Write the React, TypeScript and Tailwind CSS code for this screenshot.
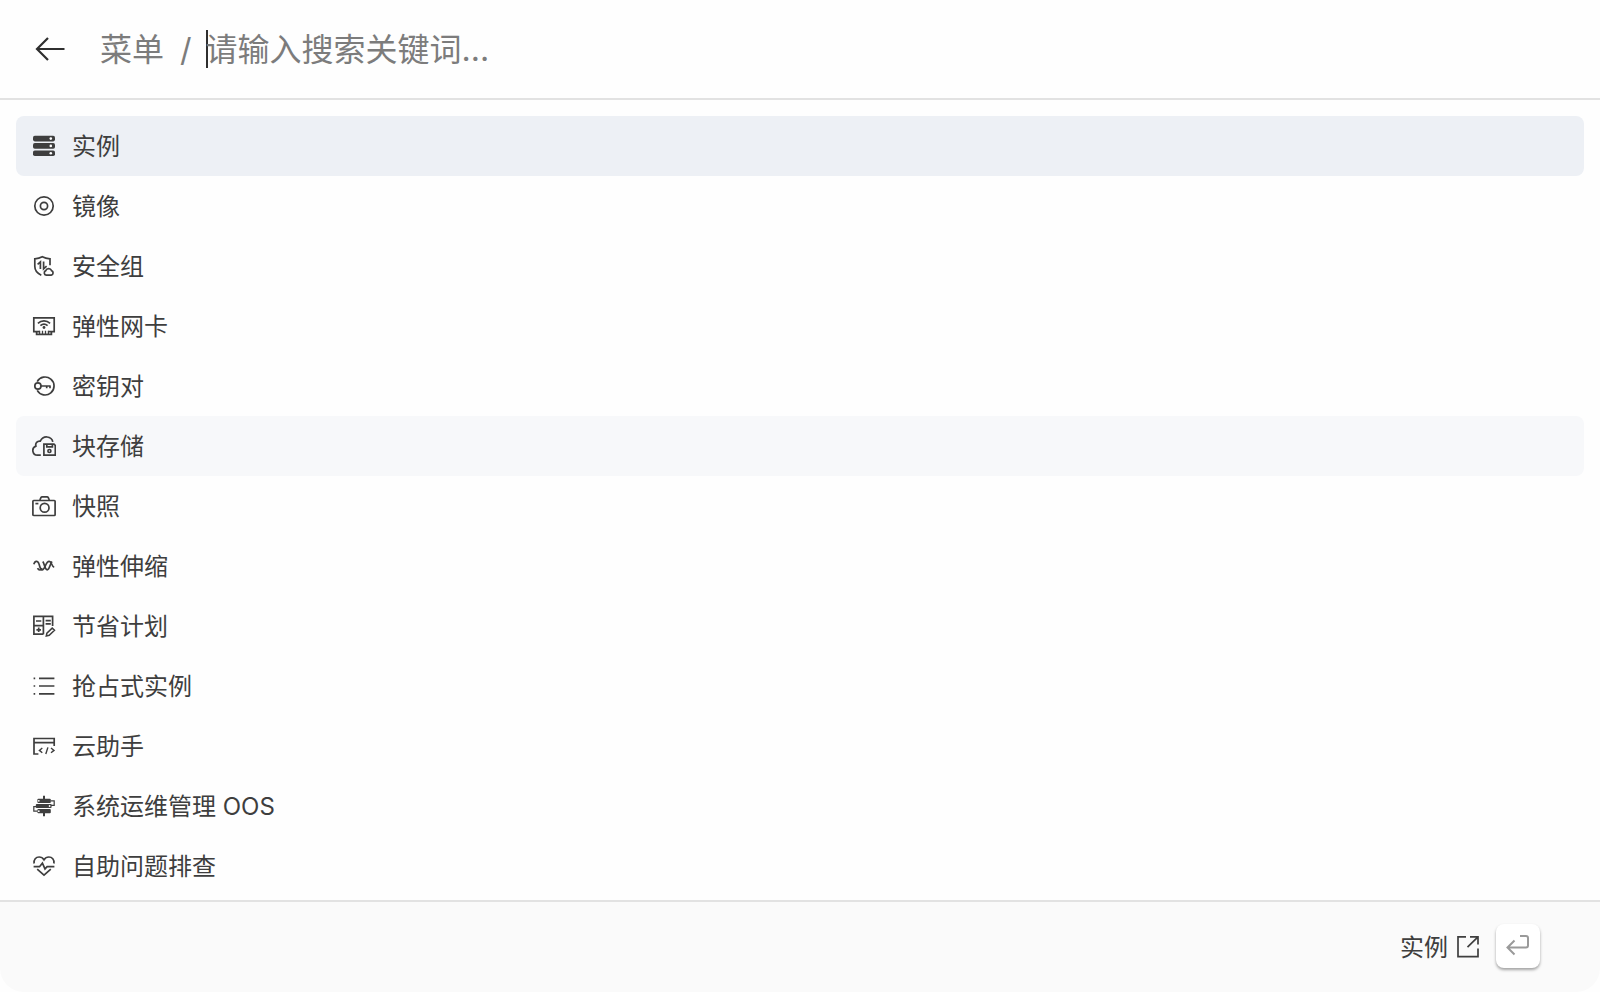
import type { ReactNode } from "react";
import clsx from "clsx";

function Icon({ children }: { children: ReactNode }) {
  return (
    <svg
      className="h-6 w-6 shrink-0"
      viewBox="0 0 24 24"
      fill="none"
      stroke="currentColor"
      strokeWidth="1.7"
      aria-hidden="true"
    >
      {children}
    </svg>
  );
}

type MenuItem = {
  label: string;
  icon: ReactNode;
  state?: "selected" | "hovered";
};

const MENU_ITEMS: MenuItem[] = [
  {
    label: "实例",
    state: "selected",
    icon: (
      <>
        <g fill="currentColor" stroke="none">
          <rect x="1" y="1.8" width="22" height="5.6" rx="1.8" />
          <rect x="1" y="9.1" width="22" height="5.6" rx="1.8" />
          <rect x="1" y="16.4" width="22" height="5.6" rx="1.8" />
        </g>
        <g fill="#fff" stroke="none">
          <circle cx="18.8" cy="4.6" r="1.3" />
          <circle cx="18.8" cy="11.9" r="1.3" />
          <circle cx="18.8" cy="19.2" r="1.3" />
        </g>
      </>
    ),
  },
  {
    label: "镜像",
    icon: (
      <>
        <circle cx="12" cy="12" r="9.2" />
        <circle cx="12" cy="12" r="3.6" />
      </>
    ),
  },
  {
    label: "安全组",
    icon: (
      <>
        <path d="M9.3 21.2C5 19.3 2.8 16.6 2.8 12.3V4.8C5.8 4.6 8.2 3.9 10.3 2.8C12.4 3.9 14.9 4.6 18 4.8V11.2" />
        <path d="M5.6 10.4L8.4 7.9V15M11.6 7.6V14.8L14.6 12.2" />
        <path d="M14.3 21.2A2.4 2.4 0 0 1 13.8 16.6A3 3 0 0 1 19.5 16.6A2.4 2.4 0 0 1 19.2 21.2Z" />
      </>
    ),
  },
  {
    label: "弹性网卡",
    icon: (
      <>
        <path d="M7.6 17.6H1.8V3.9H22.2V17.6H16.4" />
        <path d="M4.6 17.6V20.4H19.4V17.6" />
        <path d="M7.6 16.8V20M10.5 16.8V20M13.5 16.8V20M16.4 16.8V20" strokeWidth="1.3" />
        <path d="M5.9 9.3C9.4 6.1 14.6 6.1 18.1 9.3M8.4 11.7C10.5 9.8 13.5 9.8 15.6 11.7" />
        <circle cx="12" cy="13.5" r="1.4" fill="currentColor" stroke="none" />
      </>
    ),
  },
  {
    label: "密钥对",
    icon: (
      <>
        <path d="M5.2 7.6A9 9 0 1 1 5.2 16.4" />
        <circle cx="5.9" cy="12" r="3.1" />
        <path d="M9 12H18.7M14.7 12V14.2M18 12V14.2" />
      </>
    ),
  },
  {
    label: "块存储",
    state: "hovered",
    icon: (
      <>
        <path d="M8.8 21.2H5.4A4.7 4.7 0 0 1 3.9 12.1C3.1 9.2 5.2 6.8 8.3 7.2C10 3.6 12.5 2.8 15.1 3C18.3 3.3 20.3 5.3 20.8 7.8" />
        <path d="M11.9 10.1H22L23.3 11.4V21.2H11.9Z" />
        <path d="M14.8 10.2V12.9H20.4V10.2" />
        <circle cx="17.4" cy="17" r="1.5" />
      </>
    ),
  },
  {
    label: "快照",
    icon: (
      <>
        <rect x="0.9" y="6.5" width="22.2" height="15" rx="0.8" />
        <path d="M7.9 6L8.9 3.6Q9.3 2.8 10.2 2.8H15Q15.9 2.8 16.3 3.6L17.3 6" />
        <circle cx="12.6" cy="13.8" r="4.4" />
        <path d="M3.4 9.6H6.4" />
      </>
    ),
  },
  {
    label: "弹性伸缩",
    icon: (
      <>
        <path d="M1.8 10.2C2.8 7 5.2 6.2 6.6 9C8.2 12.4 7.8 16 10.2 16C13.2 16 13.4 7.3 17.2 7.3C19.8 7.3 19.4 12.6 22.2 13.2" />
        <path d="M5.6 14.2C6.6 16.6 8.8 16.6 10.2 14.2M10.8 7.6C12.8 10.4 12.8 15.8 15.2 15.8C17.6 15.8 17.8 10.4 20 7.4" />
      </>
    ),
  },
  {
    label: "节省计划",
    icon: (
      <>
        <path d="M11.4 20.2H1.9V2.3H20.6V12M11.4 2.3V20.2M1.9 11.6H11.4" />
        <path d="M4 7H9.3M13.6 6.6H18.8M13.6 9.8H18.8" />
        <path d="M4.4 15.8H9M6.7 13.5V18.1" />
        <path d="M20.2 14.1L22.5 16.3L17.2 21.2L14.3 21.9L14.9 19.2Z" strokeWidth="1.5" />
      </>
    ),
  },
  {
    label: "抢占式实例",
    icon: (
      <>
        <path d="M7 4.3H22.4M7 12H22.4M7 19.8H22.4" />
        <path d="M1.6 4.3H3.2M1.6 12H3.2M1.6 19.8H3.2" />
      </>
    ),
  },
  {
    label: "云助手",
    icon: (
      <>
        <path d="M6.4 20H2V4.5H22.2V12M2 8.6H22.2" />
        <path d="M10.3 14L7.4 16.4L10.3 18.8M15.9 13.4L13.8 20M19 14L22 16.4L19 18.8" strokeWidth="1.4" />
      </>
    ),
  },
  {
    label: "系统运维管理 OOS",
    icon: (
      <>
        <path d="M12 1.8V5.2M12 18.8V22.2" strokeWidth="2" />
        <g fill="currentColor" stroke="none">
          <rect x="5.4" y="4.7" width="13.4" height="4.2" rx="1" />
          <rect x="3.8" y="9.9" width="15.8" height="4.2" rx="1" />
          <rect x="5.4" y="15.1" width="13.4" height="4.2" rx="1" />
        </g>
        <path d="M18.6 6.8H22.2V11.3H19M5.6 12.6H1.8V17.2H5.6" strokeWidth="1.2" />
        <g fill="#fff" stroke="none">
          <circle cx="6.8" cy="6.8" r="0.9" />
          <circle cx="17.6" cy="12" r="0.9" />
          <circle cx="6.8" cy="17.2" r="0.9" />
        </g>
      </>
    ),
  },
  {
    label: "自助问题排查",
    icon: (
      <>
        <path d="M2.1 9.5C1.5 5.6 4 3 7.1 3C9.3 3 11 4.2 12 5.8C13 4.2 14.7 3 16.9 3C20 3 22.5 5.6 21.9 9.5" />
        <path d="M1.6 12.7H7.5L10.4 9.2L13 14.9L15.1 12.7H22.4" />
        <path d="M5.2 15.2L12 21.2L18.8 15.2" />
      </>
    ),
  },
];

function MenuRow({ label, icon, state }: MenuItem) {
  return (
    <li>
      <button
        type="button"
        className={clsx(
          "flex h-15 w-full items-center gap-4 rounded-lg px-4 text-left",
          state === "selected" && "bg-[#edf0f5]",
          state === "hovered" && "bg-[#f7f8fa]",
        )}
      >
        <Icon>{icon}</Icon>
        <span className="pt-0.5">{label}</span>
      </button>
    </li>
  );
}

export default function App() {
  return (
    <div className="flex min-h-screen flex-col bg-[#fefefe] font-['Inter','Noto_Sans_CJK_SC',sans-serif] text-2xl text-[#3e3e3e]">
      <header className="flex h-25 items-center border-b-2 border-[#e2e2e2] px-8 text-[32px] leading-10 text-[#7c7c7c]">
        <button type="button" aria-label="返回" className="mr-8 text-[#2f2f2f]">
          <svg className="h-9 w-9" viewBox="0 0 36 36" fill="none" stroke="currentColor" strokeWidth="2.2">
            <path d="M32.5 18H5M16 7L5 18L16 29" />
          </svg>
        </button>
        <span className="pt-0.5">菜单</span>
        <span className="mr-3.5 ml-4 pt-0.5">/</span>
        <span className="h-[38px] w-0.5 shrink-0 bg-[#2f2f2f]" />
        <input
          type="text"
          aria-label="搜索"
          placeholder="请输入搜索关键词..."
          className="-ml-0.5 min-w-0 flex-1 bg-transparent pt-0.5 outline-none placeholder:text-[#7c7c7c]"
        />
      </header>

      <main className="flex-1 px-4 pt-4 pb-1">
        <ul>
          {MENU_ITEMS.map((item) => (
            <MenuRow key={item.label} {...item} />
          ))}
        </ul>
      </main>

      <footer className="flex items-center justify-end gap-4 rounded-b-3xl border-t-2 border-[#e2e2e2] bg-[#fafafa] px-15 pt-[22px] pb-6">
        <a href="#instance" className="flex items-center gap-2">
          <span className="pt-1">实例</span>
          <Icon>
            <path d="M10 2.8H2V22.6H22V14.6M14 2.8H22V10.6M22 2.8L11.5 13.1" />
          </Icon>
        </a>
        <button
          type="button"
          aria-label="确认"
          className="flex h-11 w-11 items-center justify-center rounded-lg bg-white text-[#9a9a9a] shadow-[0_2px_3px_rgba(0,0,0,0.35)]"
        >
          <svg className="h-6 w-6" viewBox="0 0 24 24" fill="none" stroke="currentColor" strokeWidth="2">
            <path d="M14 2H20Q22 2 22 4V11.5Q22 13.5 20 13.5H1.5M8.5 6.5L1.5 13.5L8.5 20.5" />
          </svg>
        </button>
      </footer>
    </div>
  );
}
